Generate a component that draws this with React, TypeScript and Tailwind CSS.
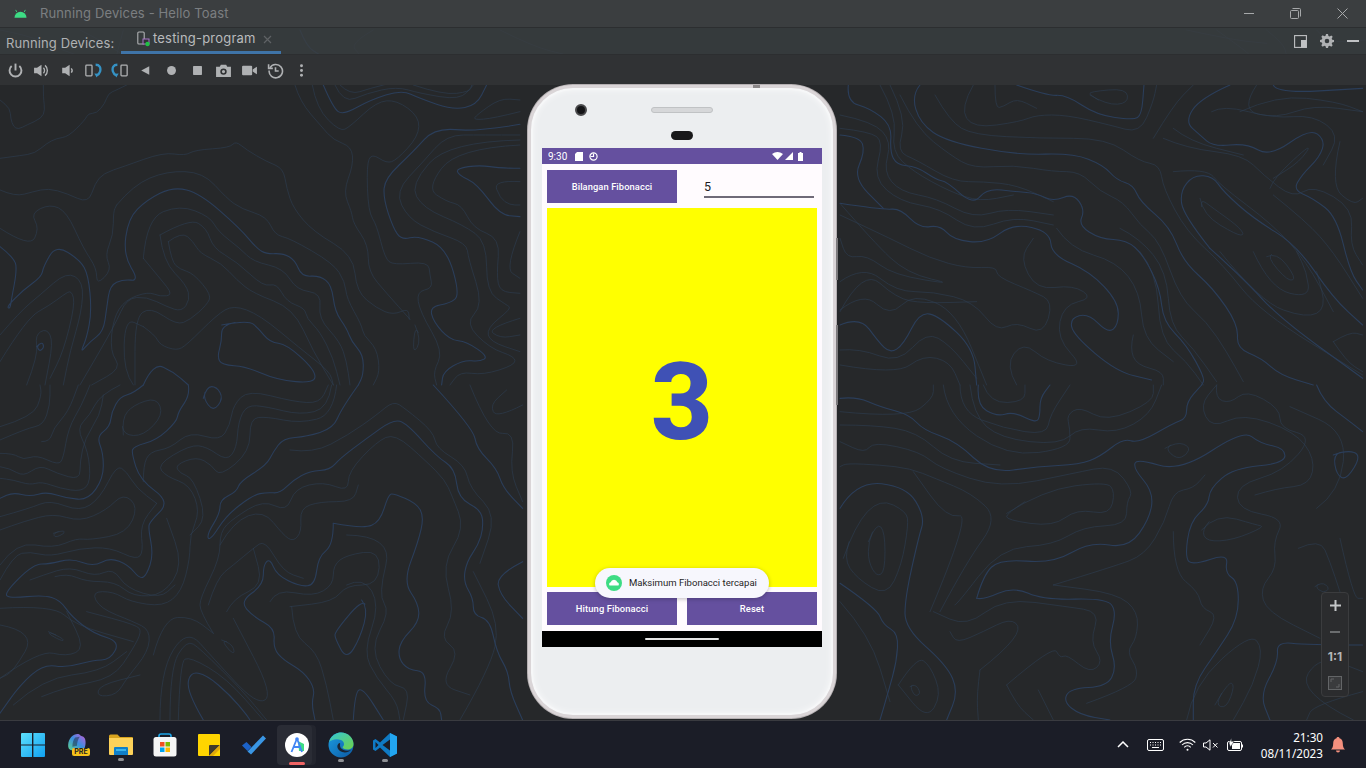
import React from "react";

const uiFont = { fontFamily: '"Inter", "Liberation Sans", sans-serif' };

// contour wallpaper, points traced at 3x and smoothed
function smooth(pts: string, closed = false) {
  const p = pts.trim().split(/\s+/).map((s) => s.split(",").map(Number));
  if (closed) p.push(p[0], p[1]);
  let d = `M${p[0][0]} ${p[0][1]}`;
  for (let i = 1; i < p.length - 1; i++) {
    const mx = (p[i][0] + p[i + 1][0]) / 2;
    const my = (p[i][1] + p[i + 1][1]) / 2;
    d += `Q${p[i][0]} ${p[i][1]} ${mx} ${my}`;
  }
  if (!closed) d += `L${p[p.length - 1][0]} ${p[p.length - 1][1]}`;
  return d;
}

type Panel = { x: number; y: number; thick: string[]; thin: string[]; loops: string[]; thickLoops: string[] };

const panels: Panel[] = [
  {
    x: 0, y: 85,
    thick: [
      "0,485 45,520 50,560 35,640 30,672 20,665 70,615 125,575 130,545 168,480 240,525 265,570 275,680 260,760 240,805 270,770 310,740 320,670 330,600 370,583 418,588 370,510 385,400 440,345 520,305 600,325 720,430 770,490 800,507 850,505 885,525 905,575 960,572 995,600 1005,680 1040,730 1055,770 1090,810 1090,870 1075,900",
      "970,0 1000,70 1030,90 1110,45 1205,15 1260,40 1360,75 1430,60 1460,0",
      "1560,118 1430,140 1305,128 1240,200 1155,280 1150,340 1180,430 1205,465 1255,452 1340,490 1380,630 1350,655 1290,665 1300,710 1350,765 1400,770 1465,815 1440,830 1390,825 1330,860 1325,900",
      "430,900 460,833 520,860 565,900",
      "1560,250 1500,250 1440,240 1370,250 1375,270 1430,295 1500,390 1560,395",
    ],
    thin: [
      "130,0 130,40 135,75 125,100 80,120 55,133 40,125 32,100 30,70 0,45",
      "380,0 350,15 325,25 315,55 290,85 265,85 255,105 205,155 170,160 140,175 105,205 60,212 0,220",
      "0,315 45,335 100,320 145,310 200,325 265,355 285,295 310,265 370,245 490,202 555,212 585,195 690,188 707,168 740,195 800,230 850,250 860,310 880,370 940,440 1060,510 1070,620 1130,670 1180,690 1225,670 1228,703",
      "350,360 400,300 500,258 610,262 680,340 725,372 800,395 825,450 870,460 1000,535 1035,590 1040,640 1085,720 1090,750 1130,790 1140,860 1120,900",
      "430,520 440,400 540,360 630,395 655,440 720,490 760,530 850,550 890,615 965,625 955,700 1020,770 1040,830 1050,900",
      "430,520 480,580 520,630 480,635 445,620 375,645 340,700 330,800 365,850 275,900",
      "480,450 570,400 620,430 640,490 710,530 790,605 830,595 860,650 915,670 920,700 960,740 1000,820 1020,900",
      "480,450 490,530 560,600 570,645 545,680 500,665 440,635 380,640 345,720 240,900",
      "505,470 545,440 580,470 600,505 665,535 710,585 760,625 880,670 940,800 1000,900",
      "505,470 515,530 540,553 580,565 635,630 620,660 570,705 530,720 450,665 405,700 405,900",
      "885,0 900,50 965,125 1000,165 1055,185 1060,240 1030,320 1055,380 1060,415 1105,480 1105,560 1160,625 1230,703",
      "937,0 950,70 1020,140 1050,125 1130,50 1190,45 1258,95 1255,155 1190,225 1160,235 1115,205 1100,240 1105,380 1130,420 1155,520 1180,540 1285,530 1290,570 1298,610 1250,620 1260,680 1330,800 1300,860 1310,900",
      "1020,0 1050,30 1110,10 1190,-10",
      "1005,0 1030,55 1100,25 1190,5 1260,25 1380,45 1420,0",
      "1240,0 1330,30 1410,20 1415,0",
      "1560,150 1440,150 1340,150 1270,230 1185,320 1225,400 1300,440 1400,475 1405,520 1450,660 1395,715 1470,790 1545,815 1545,840 1450,870 1380,860 1350,900",
      "1560,165 1345,170 1230,300 1270,370 1390,420 1460,470 1460,620 1520,660 1535,670 1460,730 1470,770 1560,800",
      "1560,180 1370,190 1280,310 1340,350 1385,360 1420,430 1500,460 1490,570 1500,620 1560,625",
      "1560,290 1480,285 1500,340 1530,360 1560,360",
      "1560,440 1515,550 1560,580",
      "1560,80 1480,100 1420,105 1430,90 1500,40 1560,45",
      "0,750 60,680 120,630 200,560 250,590 245,680 210,800 190,900",
      "0,830 80,700 150,660 190,630 215,615 225,660 190,800 150,880",
      "80,900 115,810 105,750 140,730 160,770 135,900",
      "0,430 90,488 118,430 92,385 150,357 200,380 250,490 290,550 290,600 335,555 315,510 340,450 340,380 350,360",
      "430,725 465,750 480,780 530,797 560,780 650,690 700,660 780,690 900,790 990,860 1000,900",
      "400,900 370,860 375,700 430,725",
      "1560,700 1460,730 1500,760 1560,750",
    ],
    loops: ["1245,720 1265,765 1238,810"],
    thickLoops: ["665,720 745,705 775,730 810,772 860,778 945,855 945,895 830,885 740,845 665,840 652,815 665,770", "110,785 125,770 133,785 120,800"],
  },
  {
    x: 0, y: 385,
    thick: [
      "430,0 400,25 360,35 335,80 330,125 290,155 310,205 310,280 265,345 200,340 140,320 90,335 40,322 0,340",
      "565,0 570,30 535,80 530,110 470,165 400,185 395,205 420,285 510,350 450,410 445,430 460,510 440,570 420,582 385,540 330,518 280,545 215,520 150,537 100,537 12,625 30,640 130,630 180,645 215,695 280,745 360,770 330,825 280,825 200,848 130,838 60,900 0,985",
      "1075,0 1025,70 1000,130 920,155 850,160 820,200 800,240 720,290 710,320 660,345 660,385 620,450 630,468 680,390 760,330 800,322 840,325 880,285 930,258 990,255 1020,220 1100,160 1180,103 1220,115 1310,215 1365,250 1375,340 1445,375 1450,430 1435,480 1400,530 1390,590 1420,640 1420,690 1470,705 1490,800 1525,860 1530,920 1568,1005",
      "1000,415 1090,432 1140,410 1165,330 1180,325 1250,355 1272,395 1255,470 1210,590 1255,655 1258,710 1200,770 1195,820 1225,855 1280,860 1270,950 1320,970 1325,1005",
      "1000,415 1000,480 955,515 945,600 900,605 830,570 810,520 790,540 790,600 720,650 760,695 825,730 820,790 850,825 910,860 945,910 935,955 945,1005",
      "610,1005 560,920 570,860 620,870 690,930 740,990 750,1005",
      "1300,0 1420,130 1430,190 1490,250 1510,310 1568,370",
      "1568,530 1490,570 1500,630 1568,700",
      "1060,1005 1065,920 1090,910 1150,1005",
    ],
    thin: [
      "360,0 300,30 270,90 230,130 265,200 272,290 245,320 180,310 125,290 90,300 40,285 0,280",
      "0,205 40,205 70,225 110,210 175,240 190,220 205,130 245,60 270,0",
      "0,245 30,250 70,275 120,240 170,265 240,285 240,230 255,160 300,90 310,30",
      "0,125 100,95 125,30 120,0",
      "0,165 80,130 130,120 150,60 150,0",
      "125,170 150,170 160,130 205,80 235,0",
      "430,290 430,240 450,200 510,190 570,140 660,168 690,120 700,60 745,15 880,50 960,55 985,0",
      "995,0 985,70 900,90 800,65 740,60 715,110 710,190 680,228 620,185 570,180 470,240 500,275 570,300 600,380 570,450 570,520 545,620 490,665 390,650 340,620 275,620 300,670 400,710 450,735 445,800 380,880 350,930 290,935 300,900 420,870",
      "1010,0 1000,90 900,115 800,95 750,100 750,200 660,275 635,240 590,215 525,240 540,265 580,280 620,400 570,450",
      "870,195 940,205 1045,150 1130,90 1180,48 1215,70 1300,140 1310,190 1395,240 1410,310 1490,390 1440,535",
      "875,665 880,750 950,800 980,900 1000,1005",
      "1040,600 1090,575 1140,660 1090,800 1130,880 1190,950 1200,1005",
      "1040,450 1180,452 1135,630 1170,680 1110,790 1170,900 1230,910 1210,1005",
      "810,650 830,612 940,635 1000,600 1000,540 1040,510 1140,495 1135,600 1040,600 1000,650 870,665",
      "660,480 700,410 790,375 850,450 880,470 905,440 900,370 960,350 1060,350 1075,300",
      "640,745 600,680 600,640 660,520 660,440 700,400 790,345 860,380 885,310 970,290 1045,320 1045,260 1130,170 1185,145 1280,230 1335,285 1355,330 1395,430 1325,540 1365,680 1320,760 1380,800 1320,900 1410,930",
      "625,660 650,580 700,540 760,490 795,465 850,560 910,580",
      "680,680 700,640 790,600 760,490",
      "460,810 490,700 575,695 640,745",
      "480,1005 480,860 560,730 640,820 770,960 820,930 700,700",
      "535,1005 540,830 570,815 680,880 790,1005",
      "510,1005 510,850 560,765 600,790 730,920 800,1005",
      "0,585 40,510 90,500 150,515 240,490 330,487 410,525 430,500 420,420 470,355",
      "0,540 50,470 160,490 230,460 270,465 380,445 415,365 370,325 320,375 240,410 160,385 70,410 0,435",
      "0,395 90,370 150,345 240,380 300,340 350,240 380,260 410,310 470,355",
      "0,670 160,660 225,720 400,770",
      "90,585 130,570 210,545 285,575 340,550 380,610 480,640 525,600",
      "165,575 200,565 260,590 345,590 400,635 490,630 550,540 500,400",
      "125,935 200,905 340,880 400,790 425,740 410,720 260,680",
      "1410,0 1470,150 1545,140 1530,260 1568,350",
      "1568,60 1490,100 1470,60 1520,15",
      "0,720 110,740 40,860 0,880",
      "0,880 120,795 200,815 255,790 200,680",
      "40,960 130,880 300,860 380,800",
      "1380,1005 1470,850 1500,720 1420,560",
    ],
    loops: ["160,445 190,435 195,445 165,458", "370,150 365,100 400,60 470,37 490,90 430,153", "665,765 695,775 705,805 690,800", "145,740 190,760 190,770 150,750"],
    thickLoops: ["610,40 620,5 650,5 670,40 640,80", "1085,645 1105,670 1080,760 1040,825 1005,760 1005,740"],
  },
  {
    x: 840, y: 85,
    thick: [
      "25,0 20,50 90,70 155,120 150,200 170,240 230,245 290,285 320,290 400,360 440,310 530,320 590,325 640,350 700,325 735,375 715,420 780,462 860,465 910,510 960,610 970,710 1040,780 1095,880 1085,900",
      "240,0 215,30 240,115 320,170 530,210 700,205 790,240 830,285 880,300 900,350 990,425 1030,530 1120,610 1195,720 1190,790 1265,820 1320,870 1420,900",
      "530,0 620,32 680,30 770,90 880,105 905,90 912,0",
      "0,355 130,375 180,370 240,430 300,420 340,465 440,475 520,415 630,440 635,510 750,560 835,650 835,720 805,745 745,685 690,700 700,750 830,860 935,885",
      "1170,0 1080,40 1035,110 1080,150 1120,185 1220,175 1290,215 1410,130 1455,165 1440,215 1385,270 1360,315 1420,340 1490,395 1530,560 1568,615",
      "1110,490 1030,390 1020,320 1060,270 1120,275 1150,320 1240,400 1370,480 1480,640 1568,720",
      "1110,490 1210,580 1320,700 1568,880",
      "0,720 60,695 115,770 150,805 190,780 240,680 300,695 400,790 410,900",
      "1300,0 1310,25 1568,10",
      "0,150 60,155 75,200 40,280 130,370",
    ],
    thin: [
      "0,90 100,110 155,170 130,260 180,320 290,340 400,400 500,370 640,390",
      "0,130 90,140 130,170 100,280 180,350 300,370 400,440 520,395 640,420",
      "285,30 330,110 400,150 600,160 800,160 900,230 960,240 970,310 1040,440 1150,540 1260,680 1568,870",
      "400,0 360,70 400,130 540,110 590,90 680,90 810,120 900,145 940,50 950,0",
      "465,0 465,70 490,65 530,40 590,70",
      "0,355 100,470 200,565 350,600 160,570 80,510 20,520 0,460",
      "0,590 70,540 170,620 280,620 400,650 470,740 530,710 610,750 640,650 580,620 470,575 470,545 380,550 270,520 150,460 0,390",
      "0,675 70,620 150,695 220,625 350,680 440,900",
      "0,795 60,790 175,835 260,740 330,780 410,880",
      "0,840 170,870 250,810 330,830 360,900",
      "530,900 495,840 550,770 620,830 735,850 650,760 670,660 760,640 700,600 590,615 540,520 580,460",
      "1290,310 1300,280 1420,170 1380,230 1300,280",
      "1000,260 1100,250 1140,300 1300,420 1400,530 1480,680",
      "1200,80 1310,30 1490,50 1568,80",
      "1115,80 1150,60 1300,100 1420,90 1500,150 1450,240",
      "1250,0 1200,75 1310,100 1420,60 1568,80",
      "940,160 1000,60 1060,0",
      "970,160 1040,190 1210,210 1270,270 1360,340 1420,300 1540,370 1530,480 1568,540",
      "1000,130 1050,170 1210,210",
      "1480,770 1530,740 1568,750",
      "1480,770 1520,830 1568,860",
      "120,0 170,90 155,200 220,260 330,320 420,350 520,330",
      "150,0 200,100 170,200 230,225 340,290 430,290 530,300 640,350",
      "180,30 230,130 330,210 400,250 520,240 640,260 720,260 780,320 850,350 900,420 960,470 1020,640 1100,710 1160,800 1210,890",
      "880,750 870,790 890,840 970,860 970,900",
      "900,500 950,560 960,760 1040,830 1090,900",
      "840,430 900,460 980,560 990,720 1060,790 1130,890",
      "650,430 690,490 830,530 900,620 910,760 1000,830",
      "1300,330 1400,410 1480,500 1568,640",
      "1240,500 1290,610 1410,640 1400,560 1370,500",
      "1140,500 1260,650 1400,700 1460,670 1430,560",
      "1500,170 1470,300 1540,360 1568,340",
      "0,680 70,550 170,640 250,655 410,650",
    ],
    loops: ["1080,340 1090,390 1190,450 1215,450 1190,420 1120,370", "1280,515 1310,500 1370,580 1345,590", "750,30 800,60 865,55 860,10 750,20"],
    thickLoops: [],
  },
  {
    x: 840, y: 385,
    thick: [
      "0,40 50,35 120,65 210,90 250,135 350,170 450,265 590,245 720,238 780,215 850,160 895,175 1000,115 1040,100 1040,50 1085,0",
      "0,370 50,288 200,305 255,395 235,460 195,640 195,730 320,840 355,920 320,1005",
      "0,595 110,670 130,720 175,745 170,830 145,920 120,1005",
      "410,640 430,570 480,522 640,535 750,470 865,490 930,400 940,320 880,250 890,220 1020,260 1210,135 1260,175 1335,190 1335,235 1180,250 1110,310 1105,360 1050,410 1035,520 1060,540 1165,505 1155,565 1195,590 1195,700 1130,800 1060,900 1060,1005",
      "410,640 430,645 520,605 610,645 800,640 830,680 805,770 830,850 800,905 690,910 670,950 720,990 810,1005",
      "415,0 410,60 470,95 520,80 590,115 600,90 600,40 630,0",
      "1430,0 1450,50 1530,110 1568,140",
      "1568,780 1400,780 1310,770 1315,830 1260,930 1290,1005",
    ],
    thin: [
      "345,660 350,660 480,490 640,480 730,425 860,420 860,350 880,320 820,240 700,265 480,310 300,250 240,200 100,170 75,205 0,170",
      "300,680 380,530 475,400 395,325 285,280 210,250 120,240 20,235 0,245",
      "270,680 395,385 320,400 220,260",
      "640,600 820,545 915,510 975,410 1000,320 1060,310 1095,270",
      "360,0 360,80 490,130 620,150 630,90 690,0",
      "310,0 320,90 500,215 690,190 690,130 680,90 720,65 800,110 940,50 940,0",
      "390,0 400,90 480,160 660,180 720,125 830,145 930,90 965,0",
      "430,0 450,55 555,50 555,0",
      "0,120 100,120 230,140 330,230 480,240",
      "0,80 200,100 280,40 280,0",
      "1130,0 1125,40 1170,55 1220,15 1320,70 1320,130 1420,155 1330,260 1190,300 1195,375 1335,400 1300,470 1310,550 1260,610 1280,680 1440,760",
      "1245,330 1310,310 1410,300 1425,220 1365,140 1210,85 1115,130 1080,60 1130,0",
      "1430,370 1500,320 1520,140 1350,65",
      "1375,490 1440,460 1470,530 1500,620",
      "1040,1005 1060,900 1230,745 1270,790 1240,900 1180,1005",
      "175,900 230,815 270,840 305,930 260,1005 175,900",
      "500,900 640,780 660,820 680,808 750,865 790,830 750,770 780,680 680,665 490,640 380,725 280,680",
      "420,855 490,800 545,730 510,700 430,740 350,775 330,740",
      "500,900 530,960 580,1005",
      "595,915 640,1005",
      "740,955 880,905 895,855 860,800 890,760 895,680 830,625 640,600",
      "0,650 90,750 150,950",
      "420,855 410,930 415,1005",
      "1000,440 1000,560 1075,620 1085,670 1135,690 1080,780",
      "1540,1005 1370,920 1440,810 1568,860",
      "1568,920 1420,960 1400,1005",
      "1500,460 1540,640 1568,640",
    ],
    loops: ["85,470 110,412 135,440 135,560 110,575 85,530", "10,520 45,420 120,340 200,380 205,420 185,540 140,635 50,580", "500,385 610,315 800,290 825,320 810,390 710,372 640,425 500,405", "975,190 1010,170 1050,185 1040,210 1010,222", "1085,435 1130,385 1250,420 1275,425 1180,465 1100,470", "1125,960 1165,890 1185,900 1160,970", "210,905 225,895 243,925 225,935", "1425,605 1445,590 1470,610 1450,625"],
    thickLoops: ["1480,210 1520,195 1565,210 1520,285 1490,270"],
  },
  {
    x: 0, y: 0,
    thick: ["900,90 920,140 960,165"],
    thin: ["0,90 80,105 160,140 230,165", "240,90 300,120 370,165", "370,90 350,165", "1120,90 1050,130 1080,165", "1500,90 1600,140 1700,165", "3560,90 3700,120 3800,130", "3650,90 3720,140 3750,165", "3800,90 3850,130 3860,165", "3950,90 3980,130 4098,120"],
    loops: [],
    thickLoops: [],
  },
];

function Wallpaper() {
  return (
    <svg className="absolute inset-0" width="1366" height="768" viewBox="0 0 1366 768" fill="none" strokeLinejoin="round" strokeLinecap="round">
      {panels.map((pn, i) => (
        <g key={i} transform={`translate(${pn.x} ${pn.y}) scale(0.3333)`}>
          {pn.thin.map((s, j) => <path key={j} d={smooth(s)} stroke="#2e3e53" strokeWidth="1.800" />)}
          {pn.loops.map((s, j) => <path key={j} d={smooth(s, true)} stroke="#2e3e53" strokeWidth="1.800" />)}
          {pn.thick.map((s, j) => <path key={j} d={smooth(s)} stroke="#2b3e5a" strokeWidth="3.300" />)}
          {pn.thickLoops.map((s, j) => <path key={j} d={smooth(s, true)} stroke="#2b3e5a" strokeWidth="3.300" />)}
        </g>
      ))}
    </svg>
  );
}

function ToolIcon({ children }: { children: React.ReactNode }) {
  return (
    <div className="flex h-[26px] w-[26px] items-center justify-center">
      <svg width="17" height="17" viewBox="0 0 16 16" fill="none">{children}</svg>
    </div>
  );
}

const ic = "#afb1b3";
const blue = "#3592c4";

function Toolbar() {
  return (
    <div className="flex h-[30px] items-center bg-[#303335]/95 pl-[2px]">
      <ToolIcon>
        <path d="M8 1.500v6.500" stroke={ic} strokeWidth="1.800" />
        <path d="M4.400 3.800a5.600 5.600 0 1 0 7.200 0" stroke={ic} strokeWidth="1.800" />
      </ToolIcon>
      <ToolIcon>
        <path d="M1 5.500h2.800L8 2.500v11L3.800 10.500H1z" fill={ic} />
        <path d="M9.800 5.500a3.500 3.500 0 0 1 0 5" stroke={ic} strokeWidth="1.300" />
        <path d="M11.300 3.200a6.300 6.300 0 0 1 0 9.600" stroke={ic} strokeWidth="1.300" />
      </ToolIcon>
      <ToolIcon>
        <path d="M3 5.500h2.800L10 2.500v11L5.800 10.500H3z" fill={ic} />
        <path d="M11.500 6a3 3 0 0 1 0 4" stroke={ic} strokeWidth="1.300" />
      </ToolIcon>
      <ToolIcon>
        <rect x="0.800" y="3" width="5.800" height="10" rx="0.700" stroke={ic} strokeWidth="1.200" />
        <path d="M10 2.600c3.600 0 5.200 2.500 4.200 6.400-.4 1.500-1.500 3-3.600 4" stroke={blue} strokeWidth="2.200" />
        <path d="M8.800 10.800l3.400.2-1.200 3.600z" fill={blue} />
      </ToolIcon>
      <ToolIcon>
        <rect x="9.400" y="3" width="5.800" height="10" rx="0.700" stroke={ic} strokeWidth="1.200" />
        <path d="M6 2.600c-3.600 0-5.200 2.500-4.200 6.400.4 1.500 1.500 3 3.600 4" stroke={blue} strokeWidth="2.200" />
        <path d="M7.200 10.800l-3.400.2 1.200 3.600z" fill={blue} />
      </ToolIcon>
      <ToolIcon><path d="M4 8l7.500-4v8z" fill={ic} /></ToolIcon>
      <ToolIcon><circle cx="8" cy="8" r="4.200" fill={ic} /></ToolIcon>
      <ToolIcon><rect x="3.800" y="3.800" width="8.400" height="8.400" rx="0.600" fill={ic} /></ToolIcon>
      <ToolIcon>
        <path fillRule="evenodd" d="M1 4.500h3.500l1-2h5l1 2H15V14H1zM8 6a3 3 0 1 0 0 6 3 3 0 0 0 0-6zm0 1.500a1.500 1.500 0 1 1 0 3 1.500 1.500 0 0 1 0-3z" fill={ic} />
      </ToolIcon>
      <ToolIcon>
        <rect x="1" y="3.500" width="9.500" height="9" rx="1" fill={ic} />
        <path d="M11 7l4-2.500v7L11 9z" fill={ic} />
      </ToolIcon>
      <ToolIcon>
        <path d="M2.800 5.500A6.300 6.300 0 1 1 2 8" stroke={ic} strokeWidth="1.500" />
        <path d="M1.500 2v4h4" stroke={ic} strokeWidth="1.500" />
        <path d="M8 5v3.500h3" stroke={ic} strokeWidth="1.500" />
      </ToolIcon>
      <ToolIcon>
        <circle cx="8" cy="3.500" r="1.400" fill={ic} />
        <circle cx="8" cy="8" r="1.400" fill={ic} />
        <circle cx="8" cy="12.500" r="1.400" fill={ic} />
      </ToolIcon>
    </div>
  );
}

function TitleBar() {
  return (
    <div className="flex h-[28px] items-center border-b border-[#2c2e30] bg-[#3c3f41]/95 text-[13px] text-[#7b7e81]" style={uiFont}>
      <svg className="ml-[14px]" width="13" height="9" viewBox="0 0 14 9" fill="#3ddc84">
        <path d="M0.500 9a6.500 6.500 0 0 1 13 0z" />
        <path d="M3 3L1.800 .6M11 3L12.200 .6" stroke="#3ddc84" strokeWidth="0.900" />
      </svg>
      <span className="ml-[13px] tracking-[0.13px]">Running Devices - Hello Toast</span>
      <div className="ml-auto flex">
        <div className="flex h-[27px] w-[47px] items-center justify-center">
          <div className="h-px w-[10px] bg-[#a6a8aa]" />
        </div>
        <div className="flex h-[27px] w-[47px] items-center justify-center">
          <svg width="11" height="11" viewBox="0 0 11 11" fill="none" stroke="#a6a8aa">
            <rect x="0.500" y="2.500" width="8" height="8" rx="1" />
            <path d="M2.500 .5h7a1 1 0 0 1 1 1v7" />
          </svg>
        </div>
        <div className="flex h-[27px] w-[47px] items-center justify-center">
          <svg width="11" height="11" viewBox="0 0 11 11" stroke="#a6a8aa"><path d="M.5 .5l10 10M10.500 .5l-10 10" /></svg>
        </div>
      </div>
    </div>
  );
}

function TabRow() {
  return (
    <div className="flex h-[27px] items-stretch border-b border-[#2c2e30] bg-[#3a3e41]/80 text-[13px]" style={uiFont}>
      <span className="ml-[6px] mt-[6px] w-[115px] tracking-[0.1px] text-[#afb1b3]">Running Devices:</span>
      <div className="flex w-[160px] items-center border-b-[3px] border-[#3f74a8] pl-[16px] pb-[1px] text-[#b9bbbd]">
        <svg width="14" height="16" viewBox="0 0 14 16" fill="none">
          <rect x="0.800" y="1" width="6.400" height="12" rx="1" stroke="#afb1b3" strokeWidth="1.100" />
          <rect x="6" y="8" width="6" height="5" fill="#303335" stroke="#a874c8" strokeWidth="1" />
          <circle cx="10.500" cy="13" r="2.200" fill="#1fc243" />
        </svg>
        <span className="ml-[2px] tracking-[0.2px]">testing-program</span>
        <svg className="ml-[7px]" width="9" height="9" viewBox="0 0 9 9" stroke="#5f6265" strokeWidth="1.200"><path d="M1 1l7 7M8 1l-7 7" /></svg>
      </div>
      <div className="ml-auto flex items-center gap-[13px] pr-[7px]">
        <svg width="13" height="13" viewBox="0 0 13 13" fill="none">
          <rect x="0.600" y="0.600" width="11.800" height="11.800" stroke="#c0c2c4" strokeWidth="1.100" />
          <rect x="7" y="5" width="5.500" height="7.500" fill="#c0c2c4" />
        </svg>
        <svg width="14" height="14" viewBox="0 0 14 14" fill="#afb1b3">
          <path fillRule="evenodd" d="M6 0h2l.4 1.900 1.300.5 1.600-1 1.400 1.400-1 1.600.5 1.300 1.800.3v2l-1.800.4-.5 1.300 1 1.600-1.400 1.400-1.600-1-1.300.5L8 14H6l-.4-1.800-1.300-.5-1.600 1-1.400-1.400 1-1.600-.5-1.300L0 8V6l1.800-.4.500-1.300-1-1.600L2.700 1.300l1.600 1 1.300-.5zM7 4.700a2.300 2.300 0 1 0 0 4.600 2.300 2.300 0 0 0 0-4.600z" />
        </svg>
        <div className="h-[2px] w-[12px] bg-[#c0c2c4]" />
      </div>
    </div>
  );
}

function Phone() {
  return (
    <div className="relative flex h-[633px] w-[308px] flex-col items-center rounded-[45px] border-[3px] border-[#dad5d7] bg-[#eceef0] pt-[60px] shadow-[inset_0_0_0_2px_#f6f7f8,inset_0_0_8px_#ffffff,0_0_0_1px_#b5b0b2]">
      {/* hardware bits over the shell */}
      <div className="absolute left-[44px] top-[16px] h-[12px] w-[12px] rounded-full border-[2px] border-[#4a4a4c] bg-[#141416]" />
      <div className="absolute left-[120px] top-[19px] h-[6px] w-[62px] rounded-full border border-[#c0c2c4] bg-[#d6d7d9]" />
      <div className="absolute left-[140px] top-[43px] h-[9px] w-[22px] rounded-full bg-[#18181a]" />
      <div className="absolute -right-[5px] top-[150px] h-[42px] w-[2px] bg-[#7d7b7d]" />
      <div className="absolute -right-[5px] top-[237px] h-[80px] w-[2px] bg-[#7d7b7d]" />
      <div className="absolute -top-[3px] left-[222px] h-[3px] w-[7px] bg-[#8b8788]" />

      <div className="relative flex h-[499px] w-[280px] flex-col" style={{ fontFamily: 'Roboto, "Noto Sans", sans-serif' }}>
        <div className="flex h-[16px] items-center bg-[#65509f] pl-[6px] pr-[19px] text-[10px] text-white">
          <span>9:30</span>
          <svg className="ml-[8px]" width="8" height="9" viewBox="0 0 8 9" fill="#fff"><path d="M2 0h6v9H0V2z" /></svg>
          <svg className="ml-[6px]" width="9" height="9" viewBox="0 0 9 9" fill="none" stroke="#fff" strokeWidth="1.200"><circle cx="4.500" cy="4.500" r="3.600" /><path d="M1.500 4.500h3V1.500" /></svg>
          <div className="ml-auto flex items-center gap-[2px]">
            <svg width="11" height="8" viewBox="0 0 11 8" fill="#fff"><path d="M0 2q5.500-4 11 0L5.500 8z" /></svg>
            <svg width="8" height="8" viewBox="0 0 8 8" fill="#fff"><path d="M8 0v8H0z" /></svg>
            <svg className="ml-[3px]" width="5" height="9" viewBox="0 0 5 9" fill="#fff"><path d="M1.500 0h2v1H5v8H0V1h1.500z" /></svg>
          </div>
        </div>

        <div className="flex flex-1 flex-col bg-[#fffbfe] px-[5px] pt-[6px]">
          <div className="flex h-[33px] gap-[10px]">
            <div className="flex w-[130px] items-center justify-center bg-[#65509f] text-[9.3px] font-medium tracking-[0.1px] text-white">
              Bilangan Fibonacci
            </div>
            <div className="ml-[17px] flex w-[110px] flex-col">
              <div className="flex-1 pt-[9px] text-[12.5px] leading-[15px] text-[#1c1b1f]">5</div>
              <div className="mb-[5px] h-[2px] bg-[#6f6a78]" />
            </div>
          </div>
          <div className="mt-[5px] flex h-[379px] items-center justify-center bg-[#ffff00] pt-[8px] text-[108px] font-extrabold leading-none text-[#3f51b5]">
            3
          </div>
          <div className="mt-[5px] flex h-[33px] gap-[10px] pt-px text-[9.4px] font-medium tracking-[0.1px] text-white">
            <div className="-mt-px flex w-[130px] items-center justify-center bg-[#65509f] pt-px">Hitung Fibonacci</div>
            <div className="-mt-px flex w-[130px] items-center justify-center bg-[#65509f] pt-px">Reset</div>
          </div>
        </div>

        <div className="flex h-[16px] items-center justify-center bg-black">
          <div className="h-[2px] w-[74px] rounded-full bg-[#e6e6e6]" />
        </div>

        {/* toast */}
        <div className="absolute left-[53px] top-[420px] flex h-[30px] w-[174px] items-center rounded-full bg-[#f7f7fd] pl-[11px] text-[9.55px] text-[#1f1f1f] shadow-[0_1px_4px_rgba(0,0,0,0.25)]">
          <svg width="16" height="16" viewBox="0 0 16 16">
            <circle cx="8" cy="8" r="8" fill="#3ddc84" />
            <path d="M3.500 10.500a2.300 2.300 0 0 1 1.200-3.200 3.400 3.400 0 0 1 6.600 0 2.300 2.300 0 0 1 1.200 3.200z" fill="#fff" />
          </svg>
          <span className="ml-[7px]">Maksimum Fibonacci tercapai</span>
        </div>
      </div>
    </div>
  );
}

function ZoomControls() {
  return (
    <div className="absolute left-[1321px] top-[592px] flex h-[105px] w-[28px] flex-col items-center rounded-[4px] border border-[#3b3c3e] bg-[#2b2c2e] text-[#b4b6b8]">
      <div className="flex h-[26px] items-center justify-center">
        <svg width="11" height="11" viewBox="0 0 11 11" fill="#c4c6c8"><path d="M4.500 0h2v4.500H11v2H6.500V11h-2V6.500H0v-2h4.500z" /></svg>
      </div>
      <div className="flex h-[26px] items-center justify-center">
        <div className="h-[2px] w-[10px] bg-[#6b6d6f]" />
      </div>
      <div className="flex h-[26px] items-center justify-center text-[12px] font-bold" style={uiFont}>1:1</div>
      <div className="flex h-[26px] items-center justify-center">
        <svg width="14" height="14" viewBox="0 0 14 14" fill="none" stroke="#636567">
          <rect x="0.500" y="0.500" width="13" height="13" fill="#3a3b3d" />
          <path d="M3 6V3h3M11 8v3H8" />
        </svg>
      </div>
    </div>
  );
}

function TaskIcons() {
  return (
    <div className="flex items-center">
      <div className="flex w-[44px] justify-center">
        <svg width="24" height="24" viewBox="0 0 24 24">
          <defs>
            <linearGradient id="win" x1="0" y1="0" x2="1" y2="1"><stop offset="0" stopColor="#5ee0fc" /><stop offset="1" stopColor="#10a0f0" /></linearGradient>
          </defs>
          <path d="M0 1a1 1 0 0 1 1-1h10v11.400H0zM12.400 0H23a1 1 0 0 1 1 1v10.400H12.400zM0 12.600h11V24H1a1 1 0 0 1-1-1zM12.400 12.600H24V23a1 1 0 0 1-1 1H12.400z" fill="url(#win)" />
        </svg>
      </div>
      <div className="relative flex w-[44px] justify-center">
        <svg width="24" height="22" viewBox="0 0 24 24" className="-mt-[2px]">
          <defs>
            <linearGradient id="cop" x1="0" y1="1" x2="1" y2="0"><stop offset="0" stopColor="#5fd38d" /><stop offset="0.500" stopColor="#3b8fe0" /><stop offset="1" stopColor="#c95ad8" /></linearGradient>
          </defs>
          <path d="M3 17c-2-5 1-13 6-15 3-1.500 6-1 7 1l3 1c3 2 3 9 1 13-2 3-5 2-8 1-2 1-7 2-9-1z" fill="url(#cop)" />
          <path d="M10 5c-2 2-3 6-3 10l5-1c0-4 1-7 3-10z" fill="#1b1e28" opacity="0.450" />
        </svg>
        <span className="absolute left-[17px] top-[13px] w-[18px] rounded-[2px] bg-[#f6c21a] text-center text-[7px] font-bold leading-[8px] text-[#222]" style={uiFont}>PRE</span>
      </div>
      <div className="relative flex w-[44px] justify-center">
        <svg width="24" height="22" viewBox="0 0 24 22">
          <path d="M0 2a1.500 1.500 0 0 1 1.500-1.500h7L11 3h12a1 1 0 0 1 1 1v3H0z" fill="#d9a41e" />
          <path d="M0 4h24v16a1 1 0 0 1-1 1H1a1 1 0 0 1-1-1z" fill="#fdd25a" />
          <path d="M5 14a1 1 0 0 1 1-1h12a1 1 0 0 1 1 1v7H5z" fill="#0f7fc9" />
          <path d="M7 15h10v2H7z" fill="#39b4ec" />
        </svg>
        <div className="absolute -bottom-[5px] left-[19px] h-[3px] w-[6px] rounded-full bg-[#8f9195]" />
      </div>
      <div className="flex w-[44px] justify-center">
        <svg width="24" height="24" viewBox="0 0 24 24">
          <path d="M6 6V3a2 2 0 0 1 2-2h8a2 2 0 0 1 2 2v3" fill="none" stroke="#1ea5e8" strokeWidth="1.600" />
          <rect x="0.500" y="4" width="23" height="19.500" rx="2.500" fill="#f5f5f5" />
          <rect x="7" y="9" width="4.500" height="4.500" fill="#f25022" />
          <rect x="12.500" y="9" width="4.500" height="4.500" fill="#7fba00" />
          <rect x="7" y="14.500" width="4.500" height="4.500" fill="#00a4ef" />
          <rect x="12.500" y="14.500" width="4.500" height="4.500" fill="#ffb900" />
        </svg>
      </div>
      <div className="flex w-[44px] justify-center">
        <svg width="22" height="22" viewBox="0 0 22 22">
          <path d="M0 1a1 1 0 0 1 1-1h20a1 1 0 0 1 1 1v21H1a1 1 0 0 1-1-1z" fill="#ffd500" />
          <path d="M11 22V12a1 1 0 0 1 1-1h10z" fill="#3f3a2b" />
          <path d="M22 11v4l-7 7h-4z" fill="#e0a80a" />
        </svg>
      </div>
      <div className="flex w-[44px] justify-center">
        <svg width="25" height="20" viewBox="0 0 25 20">
          <path d="M1 10.500l4.500-3.500 5 5-4 4z" fill="#1c62c8" />
          <path d="M6.500 16.500L22 0.500l3 3L10 19.500z" fill="#3a96e4" />
        </svg>
      </div>
      <div className="relative flex h-[40px] w-[44px] items-center justify-center">
        <div className="absolute left-[2px] top-0 h-[40px] w-[35px] rounded-[4px] bg-[#2a2c35] shadow-[4px_0_0_#23252e]" />
        <svg className="relative" width="24" height="24" viewBox="0 0 24 24" fill="none">
          <circle cx="12" cy="12" r="12" fill="#fff" />
          <path d="M13 8l6 3v7h-5z" fill="#3ddc84" />
          <path d="M12 5.500L6.500 19M12 5.500L17 19M8 14h8" stroke="#4285f4" strokeWidth="1.800" />
          <circle cx="12" cy="6" r="1.800" fill="#4285f4" />
        </svg>
        <div className="absolute bottom-0 left-[14px] h-[3px] w-[16px] rounded-full bg-[#ef6464]" />
      </div>
      <div className="relative flex w-[44px] justify-center">
        <svg width="26" height="26" viewBox="0 0 26 26">
          <defs>
            <linearGradient id="edgeA" x1="0" y1="0" x2="1" y2="1"><stop offset="0" stopColor="#1b9de2" /><stop offset="1" stopColor="#0c59a4" /></linearGradient>
            <linearGradient id="edgeB" x1="0" y1="0" x2="1" y2="1"><stop offset="0" stopColor="#33c6d6" /><stop offset="1" stopColor="#6ed24a" /></linearGradient>
          </defs>
          <circle cx="13" cy="13" r="12.500" fill="url(#edgeA)" />
          <path d="M1 10C3 3 9 .5 13 .5c7 0 12.500 5.500 12.500 11.500 0 4-3 5.500-6 5.500-3 0-5-1-5-2.500 2-1 2.500-5-1.500-7C8 6 3 8 1 10z" fill="url(#edgeB)" />
          <path d="M12 11c-3 .5-4 5 0 8 3 2 8 2 11-1-4 1.500-9 .5-10.500-2.500-1-2 0-3.500-.5-4.500z" fill="#1b1d27" opacity="0.900" />
        </svg>
        <div className="absolute -bottom-[4px] left-[19px] h-[3px] w-[6px] rounded-full bg-[#8f9195]" />
      </div>
      <div className="relative flex w-[44px] justify-center">
        <svg width="24" height="24" viewBox="0 0 24 24">
          <path d="M17 0l7 3.400v17.200L17 24 7 14.500 2.500 18 0 16.500V7.500L2.500 6 7 9.500z" fill="#0f7ac4" />
          <path d="M17 0l7 3.400v17.200L17 24z" fill="#22a5f0" />
          <path d="M17 6.500L9.500 12l7.500 5.500z" fill="#1b1d27" />
          <path d="M2.500 9v6l3-3z" fill="#1b1d27" />
        </svg>
        <div className="absolute -bottom-[5px] left-[19px] h-[3px] w-[6px] rounded-full bg-[#8f9195]" />
      </div>
    </div>
  );
}

function Tray() {
  return (
    <div className="ml-auto flex items-center text-white">
      <svg width="12" height="7" viewBox="0 0 12 7" fill="none" stroke="#fff" strokeWidth="1.500"><path d="M1 6l5-5 5 5" /></svg>
      <svg className="ml-[18px]" width="17" height="12" viewBox="0 0 17 12" fill="none" stroke="#fff">
        <rect x="0.500" y="0.500" width="16" height="11" rx="1.500" />
        <path d="M3 3.500h1M5.500 3.500h1M8 3.500h1M10.500 3.500h1M13 3.500h1M3 6h1M5.500 6h1M8 6h1M10.500 6h1M13 6h1M5 8.500h7" />
      </svg>
      <svg className="ml-[15px]" width="17" height="13" viewBox="0 0 17 13" fill="none" stroke="#fff" strokeWidth="1.100">
        <path d="M.7 4.500a11 11 0 0 1 15.600 0M3 7a7.500 7.500 0 0 1 11 0M5.300 9.400a4 4 0 0 1 6.400 0" />
        <circle cx="8.500" cy="11.700" r="1" fill="#fff" stroke="none" />
      </svg>
      <svg className="ml-[7px]" width="16" height="12" viewBox="0 0 16 12" fill="none" stroke="#fff">
        <path d="M.5 4h2.500L7 .8v10.400L3 8H.5z" />
        <path d="M10 4l4.500 4.500M14.500 4L10 8.500" />
      </svg>
      <svg className="ml-[8px]" width="17" height="14" viewBox="0 0 17 14" fill="none" stroke="#fff">
        <rect x="0.500" y="3.500" width="14" height="9" rx="1.500" />
        <path d="M15.500 6.500v3" />
        <rect x="5" y="5" width="8" height="6" fill="#fff" stroke="none" />
        <path d="M2 5l2.500-5v3.500h2.500L3.500 9z" fill="#fff" stroke="#1b1d27" strokeWidth="0.500" />
      </svg>
      <div className="ml-[8px] flex w-[71px] flex-col items-end text-[11.7px] leading-[16px]" style={{ fontFamily: '"Noto Sans", "Liberation Sans", sans-serif' }}>
        <span>21:30</span>
        <span>08/11/2023</span>
      </div>
      <svg className="ml-[8px] mr-[21px]" width="14" height="16" viewBox="0 0 14 16" fill="#f4907e">
        <path d="M7 0c1 0 1.500.7 1.500 1.300C11 2 11.800 4 11.800 6.500c0 3 .8 4.700 2.200 6H0c1.400-1.300 2.200-3 2.200-6C2.200 4 3 2 5.500 1.300 5.500.7 6 0 7 0z" />
        <path d="M5 13.500h4a2 2 0 0 1-4 0z" />
      </svg>
    </div>
  );
}

export default function App() {
  return (
    <div className="relative flex h-[768px] w-[1366px] flex-col overflow-hidden bg-[#26282a]">
      <Wallpaper />
      <div className="relative flex flex-col">
        <TitleBar />
        <TabRow />
        <Toolbar />
      </div>
      <div className="relative flex h-[635px] justify-center pr-[2px]">
        <Phone />
      </div>
      <ZoomControls />
      <div className="relative flex h-[48px] items-center border-t border-[#3a3b40] bg-[#1b1d27] pl-[11px]">
        <TaskIcons />
        <Tray />
      </div>
    </div>
  );
}
